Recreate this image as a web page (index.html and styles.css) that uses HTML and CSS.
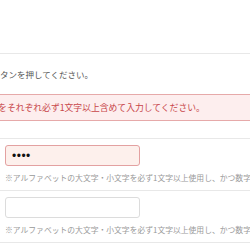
FILE: index.html
```html
<!DOCTYPE html>
<html lang="ja">
<head>
  <meta charset="UTF-8">
  <title>パスワード変更</title>
  <link rel="stylesheet" href="styles.css">
</head>
<body>
  <div class="top"></div>
  <p class="lead">「変更する」ボタンを押してください。</p>
  <div class="error">
    <p>数字をそれぞれ必ず1文字以上含めて入力してください。</p>
  </div>
  <div class="row">
    <input class="field field-error" type="password" value="abcd">
    <p class="hint">※アルファベットの大文字・小文字を必ず1文字以上使用し、かつ数字を含めてください。</p>
  </div>
  <div class="row">
    <input class="field" type="password" value="">
    <p class="hint">※アルファベットの大文字・小文字を必ず1文字以上使用し、かつ数字を含めてください。</p>
  </div>
  <div class="row"></div>
</body>
</html>
```

FILE: styles.css
```css
body {
  margin: 0;
  width: 250px;
  overflow: hidden;
  font-family: "Noto Sans CJK JP", sans-serif;
  background-color: #fff;
}
p {
  margin: 0;
  white-space: nowrap;
}
.top {
  height: 53px;
  border-bottom: 1px solid #e8e8e8;
}
.lead {
  margin: 14px 0 0 -59.5px;
  font-size: 8.5px;
  line-height: 12px;
  color: #555;
}
.error {
  margin: 14px -20px 17px -20px;
  padding: 6.5px 0;
  background-color: #fdeeee;
  border: 1px solid #e6a9a9;
}
.error p {
  margin-left: -0.5px;
  font-size: 8.8px;
  line-height: 12px;
  color: #c8464a;
}
.row {
  border-top: 1px solid #e8e8e8;
  padding: 6px 0 7px 5px;
}
.field {
  display: block;
  box-sizing: border-box;
  width: 135px;
  height: 21px;
  margin: 0;
  padding: 0 6px;
  border: 1px solid #dcdcdc;
  border-radius: 3px;
  background-color: #fff;
  font-size: 12px;
  letter-spacing: 0.5px;
  color: #111;
}
.field-error {
  background-color: #fdf0ec;
  border-color: #e3a1a1;
}
.hint {
  margin-top: 6px;
  font-size: 7.8px;
  line-height: 11px;
  color: #999;
}
```
